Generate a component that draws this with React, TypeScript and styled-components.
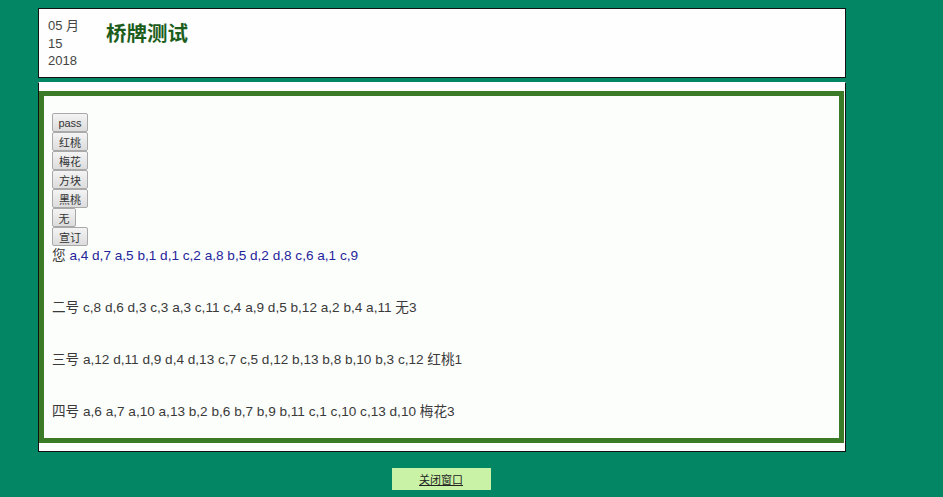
import React from 'react'
import styled, { createGlobalStyle } from 'styled-components'

const GlobalStyle = createGlobalStyle`
  html, body {
    margin: 0;
    padding: 0;
    background: #028664;
    font-family: "Liberation Sans", "Noto Sans CJK SC", sans-serif;
  }
`

const Page = styled.div`
  width: 808px;
  margin-left: 38px;
  padding-top: 8px;
  display: flex;
  flex-direction: column;
`

// 顶部标题栏
const Header = styled.header`
  height: 70px;
  border: 1px solid #111;
  background: #fdfefd;
  display: flex;
  align-items: flex-start;
  padding: 8px 0 0 9px;
  box-sizing: border-box;
`

const DateBlock = styled.div`
  width: 58px;
  font-size: 13px;
  line-height: 17.7px;
  color: #444;
`

const Title = styled.h1`
  margin: 5px 0 0 0;
  font-size: 20.5px;
  font-weight: bold;
  color: #1c5d1c;
  font-family: "Noto Sans CJK SC", sans-serif;
  line-height: 1;
`

const Board = styled.section`
  margin-top: 4px;
  border: 1px solid #111;
  border-top-color: #fdfefd;
  background: #fdfefd;
  padding: 8px 1px 8px 0;
`

const Table = styled.div`
  border: 5px solid #3b7a27;
  background: #fcfefc;
  padding: 17px 8px 18px;
  display: flex;
  flex-direction: column;
  align-items: flex-start;
`

const Bids = styled.div`
  display: flex;
  flex-direction: column;
  align-items: flex-start;
`

const BidButton = styled.button<{ $narrow?: boolean }>`
  width: ${(p) => (p.$narrow ? '24px' : '36px')};
  height: 19px;
  padding: 0;
  margin: 0;
  border: 1px solid #a9a9a9;
  border-radius: 2px;
  background: linear-gradient(#f4f4f4, #dcdcdc);
  font-size: 11px;
  color: #333;
  font-family: "Liberation Sans", "Noto Sans CJK SC", sans-serif;
`

const Hands = styled.div`
  display: flex;
  flex-direction: column;
  gap: 36px;
  margin-top: 2px;
`

const Hand = styled.div`
  font-size: 13.6px;
  line-height: 16px;
  color: #3a3a3a;
  white-space: nowrap;
`

const Card = styled.span<{ $mine?: boolean }>`
  color: ${(p) => (p.$mine ? '#24249a' : '#3a3a3a')};
`

const Footer = styled.div`
  display: flex;
  justify-content: center;
  padding-top: 16px;
`

const CloseButton = styled.a`
  width: 99px;
  height: 22px;
  margin-left: -2px;
  background: #c9f2a6;
  color: #222;
  font-size: 11px;
  text-decoration: underline;
  display: flex;
  align-items: center;
  justify-content: center;
  font-family: "Noto Sans CJK SC", sans-serif;
`

const bids = ['pass', '红桃', '梅花', '方块', '黑桃', '无', '宣订']

const hands = [
  { seat: '您', cards: 'a,4 d,7 a,5 b,1 d,1 c,2 a,8 b,5 d,2 d,8 c,6 a,1 c,9', bid: '', mine: true },
  { seat: '二号', cards: 'c,8 d,6 d,3 c,3 a,3 c,11 c,4 a,9 d,5 b,12 a,2 b,4 a,11', bid: '无3' },
  { seat: '三号', cards: 'a,12 d,11 d,9 d,4 d,13 c,7 c,5 d,12 b,13 b,8 b,10 b,3 c,12', bid: '红桃1' },
  { seat: '四号', cards: 'a,6 a,7 a,10 a,13 b,2 b,6 b,7 b,9 b,11 c,1 c,10 c,13 d,10', bid: '梅花3' },
]

export default function App() {
  return (
    <>
      <GlobalStyle />
      <Page>
        <Header>
          <DateBlock>
            05 月
            <br />
            15
            <br />
            2018
          </DateBlock>
          <Title>桥牌测试</Title>
        </Header>

        <Board>
          <Table>
            <Bids>
              {bids.map((b) => (
                <BidButton key={b} $narrow={b === '无'}>
                  {b}
                </BidButton>
              ))}
            </Bids>
            <Hands>
              {hands.map((h) => (
                <Hand key={h.seat}>
                  {h.seat} <Card $mine={h.mine}>{h.cards}</Card>
                  {h.bid && ` ${h.bid}`}
                </Hand>
              ))}
            </Hands>
          </Table>
        </Board>

        <Footer>
          <CloseButton>关闭窗口</CloseButton>
        </Footer>
      </Page>
    </>
  )
}
